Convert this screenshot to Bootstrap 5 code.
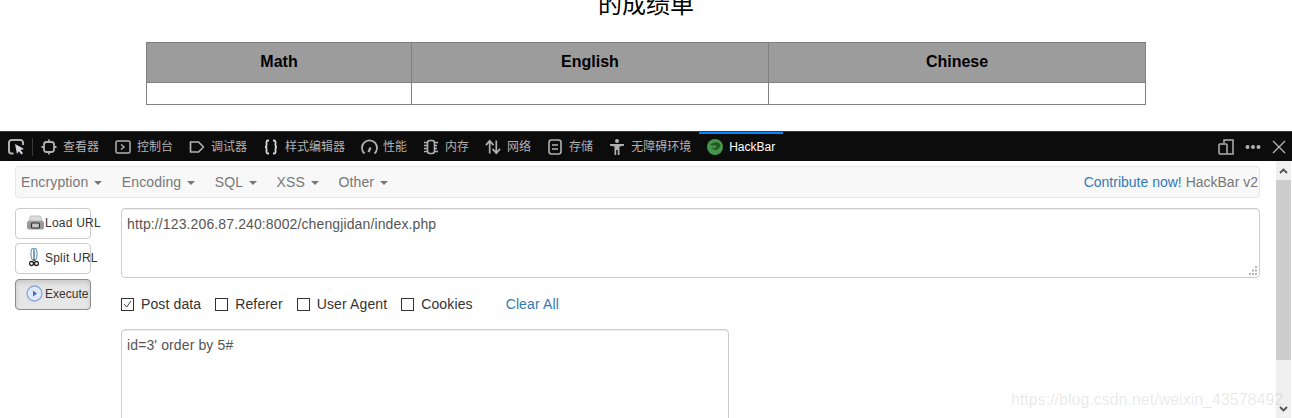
<!DOCTYPE html>
<html lang="zh">
<head>
<meta charset="utf-8">
<title>HackBar</title>
<link href="https://cdn.jsdelivr.net/npm/bootstrap@5.3.0/dist/css/bootstrap.min.css" rel="stylesheet">
<style>
html,body{height:418px;overflow:hidden;background:#fff;}
body{font-family:"Liberation Sans","Noto Sans CJK SC",sans-serif;font-size:14px;color:#555;position:relative;}
.score-title{height:131px;display:flow-root;}
.score-title h3{font-size:24px;font-weight:400;color:#000;text-align:center;line-height:28px;margin:-9px 0 26px;height:25px;}
.score-grid{width:999px;margin:0 0 0 146px;border-collapse:collapse;table-layout:fixed;color:#000;}
.score-grid th,.score-grid td{border:1px solid #808080;padding:0 0 2px;text-align:center;}
.score-grid th{background:#9c9c9c;height:40px;font-size:16px;font-weight:700;}
.score-grid td{height:22px;}
.dev-tabs{height:30px;background:#0c0c0d;border-top:1px solid #38383d;color:#b1b1b3;font-size:12px;padding-left:8px;}
.dev-tab{height:28px;gap:6px;padding:0 8px;white-space:nowrap;}
.dev-tab svg{flex:none;display:block;}
.dev-active{color:#fff;border-top:2px solid #0a84ff;margin-top:-1px;height:29px;padding:0 8px;gap:6px;font-size:12px;}
.dev-sep{width:1px;height:18px;background:#38383d;margin:0 0 0 7px;}
.dev-right{gap:11px;padding-right:6px;}
.panel-wrap{height:257px;}
.panel-main{width:1276px;padding:5px 16px 0 15px;letter-spacing:.12px;}
.bar-top{height:32px;background:#f8f8f8;border:1px solid #e7e7e7;border-radius:4px;color:#777;padding:0 1px 0 5px;font-size:14px;white-space:nowrap;}
.drop-item{margin-right:19.5px;}
.drop-item::after{content:"";display:inline-block;margin-left:6px;vertical-align:2px;border-top:4px solid #777;border-left:4px solid transparent;border-right:4px solid transparent;}
.bar-end{letter-spacing:0;}
.link-blue{color:#337ab7;text-decoration:none;}
.work-row{padding-top:10px;gap:30px;}
.side-col{width:76px;gap:4px;flex:none;}
.tool-btn{height:31px;width:76px;background:#fff;border:1px solid #ccc;border-radius:4px;color:#333;font-size:12px;line-height:1;letter-spacing:.22px;white-space:nowrap;padding:0 0 2px 10px;align-items:center;}
.tool-btn svg{flex:none;}
.tool-on{background:#e6e6e6;border-color:#8c8c8c;box-shadow:inset 0 3px 5px rgba(0,0,0,.125);margin-top:1px;letter-spacing:.02px;}
.text-col{flex:1;min-width:0;}
.url-area,.post-area{display:block;border:1px solid #ccc;border-radius:4px;background:#fff;color:#555;font-size:14px;line-height:20px;padding:5px;box-shadow:inset 0 1px 1px rgba(0,0,0,.075);}
.url-area{width:100%;height:70px;position:relative;}
.grip-mark{position:absolute;right:1px;bottom:1px;display:block;}
.post-area{width:608px;height:120px;margin-top:15px;}
.check-row{height:20px;margin-top:16px;color:#333;}
.check-box{width:13px;height:13px;border:1px solid #333;margin-right:7px;flex:none;display:block;}
.check-lab{margin-right:14px;}
.scroll-rail{width:15px;background:#f0f0f0;flex:none;height:257px;}
.scroll-up,.scroll-down{height:19px;}
.scroll-thumb{height:180px;background:#cdcdcd;}
.water-mark{position:absolute;left:1011px;top:389px;font-size:16px;line-height:22px;color:rgba(120,120,120,.17);white-space:nowrap;}
</style>
</head>
<body>
<div class="score-title">
  <h3>的成绩单</h3>
  <table class="score-grid">
    <colgroup><col style="width:265px"><col style="width:357px"><col style="width:377px"></colgroup>
    <tr><th>Math</th><th>English</th><th>Chinese</th></tr>
    <tr><td></td><td></td><td></td></tr>
  </table>
</div>
<div class="dev-tabs d-flex align-items-center">
  <svg width="17" height="16" viewBox="0 0 17 16" fill="none" class="flex-none"><path d="M5.500 14.500H3.500a2.500 2.500 0 0 1-2.500-2.500V3.500A2.500 2.500 0 0 1 3.500 1h9A2.500 2.500 0 0 1 15 3.500V6" stroke="#b1b1b3" stroke-width="2"/><path d="M7 5l9 5-3.500 1 2.500 3.200-1.700 1.300-2.400-3.200L9 15z" fill="#d7d7db"/></svg>
  <span class="dev-sep"></span>
  <div class="dev-tab d-flex align-items-center"><svg width="16" height="16" viewBox="0 0 16 16" fill="none" stroke="#b1b1b3" stroke-width="1.800"><rect x="3" y="3" width="10" height="10" rx="2.500"/><path d="M8 .5V3M8 13v2.500M.5 8H3M13 8h2.500"/></svg><span>查看器</span></div>
  <div class="dev-tab d-flex align-items-center"><svg width="16" height="16" viewBox="0 0 16 16" fill="none" stroke="#b1b1b3" stroke-width="1.500"><rect x="1" y="2" width="14" height="12" rx="1.500"/><path d="M6 5.500l3 2.500-3 2.500"/></svg><span>控制台</span></div>
  <div class="dev-tab d-flex align-items-center"><svg width="16" height="16" viewBox="0 0 16 16" fill="none" stroke="#b1b1b3" stroke-width="1.700"><path d="M1.500 3h8l5 5-5 5h-8z" stroke-linejoin="round"/></svg><span>调试器</span></div>
  <div class="dev-tab d-flex align-items-center"><svg width="16" height="16" viewBox="0 0 16 16" fill="none" stroke="#d7d7db" stroke-width="1.800"><path d="M6 1.500H5A1.500 1.500 0 0 0 3.500 3v3.500A1.500 1.500 0 0 1 2 8a1.500 1.500 0 0 1 1.500 1.500V13A1.500 1.500 0 0 0 5 14.500h1M10 1.500h1A1.500 1.500 0 0 1 12.500 3v3.500A1.500 1.500 0 0 0 14 8a1.500 1.500 0 0 0-1.500 1.500V13a1.500 1.500 0 0 1-1.500 1.500h-1"/></svg><span>样式编辑器</span></div>
  <div class="dev-tab d-flex align-items-center"><svg width="17" height="16" viewBox="0 0 17 16" fill="none" stroke="#b1b1b3" stroke-width="1.800" style="margin-right:-1px"><path d="M3.500 14.500A7.500 7.500 0 1 1 13.500 14.500"/><path d="M7.500 13l2-4.500" stroke-width="2.200"/></svg><span>性能</span></div>
  <div class="dev-tab d-flex align-items-center"><svg width="16" height="16" viewBox="0 0 16 16" fill="none" stroke="#b1b1b3" stroke-width="1.600"><rect x="4.500" y="1.500" width="7" height="13" rx="2.500"/><path d="M1 3.500h3M1 6.500h3M1 9.500h3M1 12.500h3M12 3.500h3M12 6.500h2M12 9.500h2M12 12.500h3"/></svg><span>内存</span></div>
  <div class="dev-tab d-flex align-items-center"><svg width="16" height="16" viewBox="0 0 17 16" fill="none" stroke="#b1b1b3" stroke-width="1.800"><path d="M5 15V2M1 6l4-4.500L9 6M12 1v13M8 10l4 4.500 4-4.500"/></svg><span>网络</span></div>
  <div class="dev-tab d-flex align-items-center"><svg width="16" height="16" viewBox="0 0 16 16" fill="none" stroke="#b1b1b3" stroke-width="1.600"><rect x="2" y="1" width="12" height="14" rx="2.500"/><path d="M5 6h6M5 10h6"/></svg><span>存储</span></div>
  <div class="dev-tab d-flex align-items-center"><svg width="16" height="16" viewBox="0 0 16 16" fill="#b1b1b3"><circle cx="8" cy="2" r="2"/><path d="M1 5h14v1.800l-4.500.6V16H8.800v-5H7.200v5H5.500V7.400L1 6.800z"/></svg><span>无障碍环境</span></div>
  <div class="dev-active d-flex align-items-center"><svg width="16" height="16" viewBox="0 0 16 16" class="flex-none"><circle cx="8" cy="8" r="8" fill="#46964a"/><path d="M3 6c2-3 8-4 10-1 1 3-2 7-5 6-2-.5-3-2-4-3 2 1 4 1.500 5 .5 1-1 0-2-1-2-2 0-3 0-5-.5z" fill="#235a26"/></svg><span>HackBar</span></div>
  <div class="dev-right d-flex align-items-center ms-auto">
    <svg width="16" height="16" viewBox="0 0 16 16" fill="none" stroke="#b1b1b3" stroke-width="1.500"><path d="M6 4V1h9v14H9"/><rect x="1" y="5" width="8" height="10" rx="1"/></svg>
    <svg width="16" height="16" viewBox="0 0 16 16" fill="#b1b1b3"><circle cx="2.500" cy="8" r="2"/><circle cx="8" cy="8" r="2"/><circle cx="13.500" cy="8" r="2"/></svg>
    <svg width="14" height="14" viewBox="0 0 14 14" fill="none" stroke="#b1b1b3" stroke-width="1.400"><path d="M1 1l12 12M13 1L1 13"/></svg>
  </div>
</div>
<div class="panel-wrap d-flex">
  <div class="panel-main">
    <div class="bar-top d-flex align-items-center">
      <span class="drop-item">Encryption</span><span class="drop-item">Encoding</span><span class="drop-item">SQL</span><span class="drop-item">XSS</span><span class="drop-item">Other</span>
      <span class="ms-auto bar-end"><a class="link-blue" href="#">Contribute now!</a> HackBar v2</span>
    </div>
    <div class="work-row d-flex">
      <div class="side-col d-flex flex-column">
        <div class="tool-btn d-flex">
          <svg width="19" height="15" viewBox="0 0 19 15"><path d="M3 6l1.500-5h10L16 6z" fill="#dcdcdc" stroke="#b5b5b5" stroke-width=".8"/><rect x="1" y="6" width="17" height="8.500" rx="2" fill="#9a9a9a"/><rect x="5.500" y="8" width="8" height="5" rx="1" fill="#c4c4c4" stroke="#333" stroke-width="1.200"/></svg><span>Load URL</span>
        </div>
        <div class="tool-btn d-flex" style="padding-left:13px;gap:6px">
          <svg width="10" height="19" viewBox="0 0 10 19" fill="none"><ellipse cx="3.700" cy="6" rx="1.700" ry="5.500" stroke="#6f97b8" stroke-width="1.200"/><ellipse cx="6.300" cy="6" rx="1.700" ry="5.500" stroke="#6f97b8" stroke-width="1.200"/><circle cx="2.500" cy="15.500" r="2" stroke="#222" stroke-width="1.300"/><circle cx="7.500" cy="15.500" r="2" stroke="#222" stroke-width="1.300"/><path d="M3.500 13.500l1.500-2 1.500 2" stroke="#222"/></svg><span>Split URL</span>
        </div>
        <div class="tool-btn tool-on d-flex" style="gap:2px">
          <svg width="17" height="17" viewBox="0 0 17 17"><circle cx="8.500" cy="8.500" r="7.500" fill="#dfe9f7" stroke="#8aa9d6" stroke-width="1.300"/><path d="M7 5.500l4 3-4 3z" fill="#3f6fc0"/></svg><span>Execute</span>
        </div>
      </div>
      <div class="text-col">
        <div class="url-area">http://123.206.87.240:8002/chengjidan/index.php<svg class="grip-mark" width="11" height="11" viewBox="0 0 11 11" fill="#b5b5b5"><path d="M8 1h2v2H8zM5 4.500h2v2H5zM8 4.500h2v2H8zM2 8h2v2H2zM5 8h2v2H5zM8 8h2v2H8z"/></svg></div>
        <div class="check-row d-flex align-items-center">
          <svg class="check-box" viewBox="0 0 13 13" fill="none"><path d="M2.500 6l3 3.500 5-7" stroke="#333" stroke-width="1.100"/></svg><span class="check-lab">Post data</span>
          <span class="check-box"></span><span class="check-lab">Referer</span>
          <span class="check-box"></span><span class="check-lab">User Agent</span>
          <span class="check-box"></span><span class="check-lab">Cookies</span>
          <a class="link-blue" style="margin-left:19px" href="#">Clear All</a>
        </div>
        <div class="post-area">id=3' order by 5#</div>
      </div>
    </div>
  </div>
  <div class="scroll-rail d-flex flex-column">
    <div class="scroll-up d-flex align-items-center justify-content-center"><svg width="9" height="6" viewBox="0 0 9 6" fill="none" stroke="#505050" stroke-width="1.800"><path d="M1 5l3.500-3.500L8 5"/></svg></div>
    <div class="scroll-thumb"></div>
    <div class="flex-grow-1"></div>
    <div class="scroll-down d-flex align-items-center justify-content-center"><svg width="9" height="6" viewBox="0 0 9 6" fill="none" stroke="#505050" stroke-width="1.800"><path d="M1 1l3.500 3.500L8 1"/></svg></div>
  </div>
</div>
<div class="water-mark">https://blog.csdn.net/weixin_43578492</div>
</body>
</html>
